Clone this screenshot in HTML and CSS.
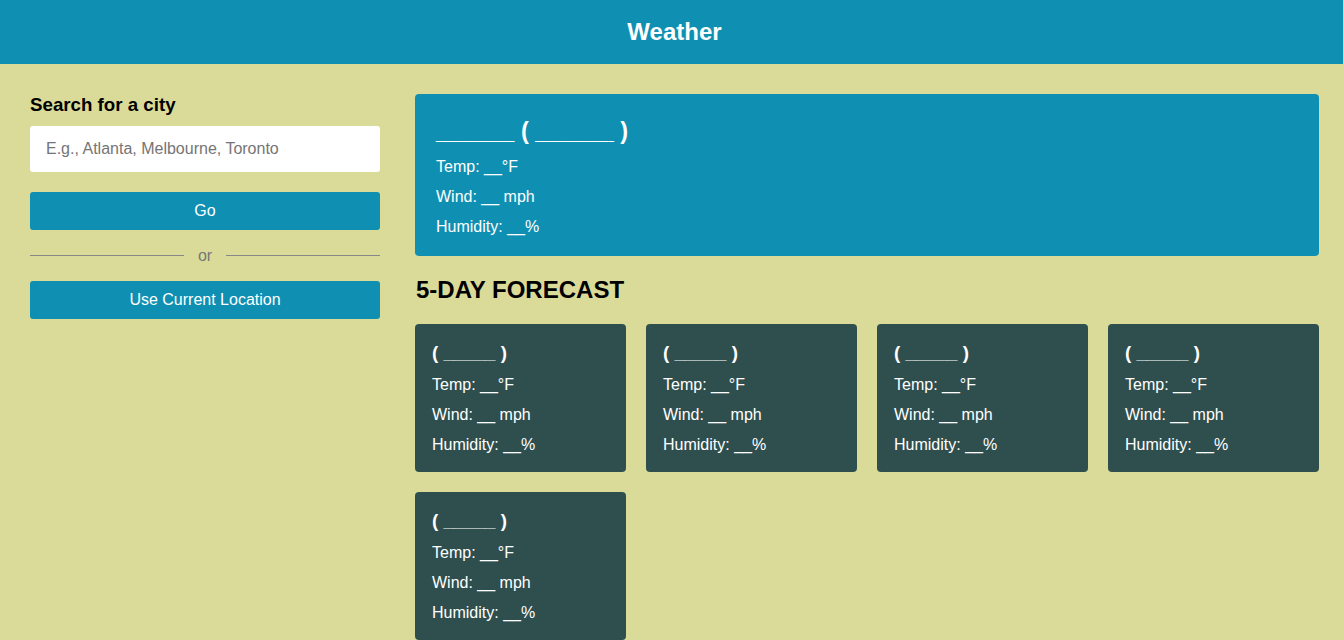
FILE: index.html
```html
<!DOCTYPE html>
<html lang="en">
<head>
<meta charset="utf-8">
<title>Weather</title>
<link rel="stylesheet" href="styles.css">
</head>
<body>
<header class="topbar"><h1 class="brand">Weather</h1></header>
<div class="layout">
  <aside class="sidebar">
    <h3 class="search-title">Search for a city</h3>
    <input class="search-input" type="text" placeholder="E.g., Atlanta, Melbourne, Toronto">
    <button class="btn">Go</button>
    <div class="divider"><span class="line"></span><span class="or">or</span><span class="line"></span></div>
    <button class="btn">Use Current Location</button>
  </aside>
  <main class="content">
    <section class="current">
      <h2 class="current-title">______ ( ______ )</h2>
      <p class="stat">Temp: __°F</p>
      <p class="stat">Wind: __ mph</p>
      <p class="stat">Humidity: __%</p>
    </section>
    <h2 class="forecast-title">5-DAY FORECAST</h2>
    <div class="forecast-grid">
      <div class="day"><h3 class="day-title">( _____ )</h3><p class="stat">Temp: __°F</p><p class="stat">Wind: __ mph</p><p class="stat">Humidity: __%</p></div>
      <div class="day"><h3 class="day-title">( _____ )</h3><p class="stat">Temp: __°F</p><p class="stat">Wind: __ mph</p><p class="stat">Humidity: __%</p></div>
      <div class="day"><h3 class="day-title">( _____ )</h3><p class="stat">Temp: __°F</p><p class="stat">Wind: __ mph</p><p class="stat">Humidity: __%</p></div>
      <div class="day"><h3 class="day-title">( _____ )</h3><p class="stat">Temp: __°F</p><p class="stat">Wind: __ mph</p><p class="stat">Humidity: __%</p></div>
      <div class="day"><h3 class="day-title">( _____ )</h3><p class="stat">Temp: __°F</p><p class="stat">Wind: __ mph</p><p class="stat">Humidity: __%</p></div>
    </div>
  </main>
</div>
</body>
</html>
```
FILE: styles.css
```css
* { box-sizing: border-box; }
body {
  margin: 0;
  font-family: "Liberation Sans", Arial, sans-serif;
  background: #dadb98;
  color: #000;
}
.topbar {
  background: #0f90b3;
  height: 64px;
  display: flex;
  align-items: center;
  justify-content: center;
  padding-left: 6px;
}
.brand {
  margin: 0;
  color: #fff;
  font-size: 24px;
  font-weight: bold;
}
.layout {
  display: flex;
  padding: 30px 24px 0 30px;
  gap: 35px;
}
.sidebar {
  width: 350px;
  flex: none;
  display: flex;
  flex-direction: column;
}
.search-title {
  margin: 0 0 10px;
  font-size: 18.72px;
  line-height: 22px;
}
.search-input {
  height: 46px;
  border: none;
  border-radius: 3px;
  background: #fff;
  padding: 0 16px;
  font-family: inherit;
  font-size: 16px;
  color: #333;
  margin-bottom: 20px;
}
.search-input::placeholder { color: #757575; }
.btn {
  height: 38px;
  border: none;
  border-radius: 3px;
  background: #0f90b3;
  color: #fff;
  font-family: inherit;
  font-size: 16px;
}
.divider {
  display: flex;
  align-items: center;
  gap: 14px;
  height: 14px;
  margin: 18px 0 19px;
}
.divider .line {
  flex: 1;
  height: 1px;
  background: #888;
}
.divider .or {
  color: #777;
  font-size: 16px;
  line-height: 14px;
  padding-top: 1px;
}
.content {
  flex: 1;
  min-width: 0;
}
.current {
  background: #0f90b3;
  color: #fff;
  border-radius: 4px;
  padding: 20px 21px 14px;
}
.current-title {
  margin: 0 0 4px;
  font-size: 23.5px;
  line-height: 34px;
}
.stat {
  margin: 0;
  font-size: 16px;
  line-height: 30px;
}
.forecast-title {
  margin: 20px 0 20px 1px;
  font-size: 24px;
  line-height: 28px;
}
.forecast-grid {
  display: grid;
  grid-template-columns: repeat(4, 1fr);
  gap: 20px;
}
.day {
  background: #2f4f4f;
  color: #fff;
  border-radius: 4px;
  padding: 15px 17px 12px;
}
.day-title {
  margin: 0 0 3px;
  font-size: 18.72px;
  line-height: 28px;
}
```
